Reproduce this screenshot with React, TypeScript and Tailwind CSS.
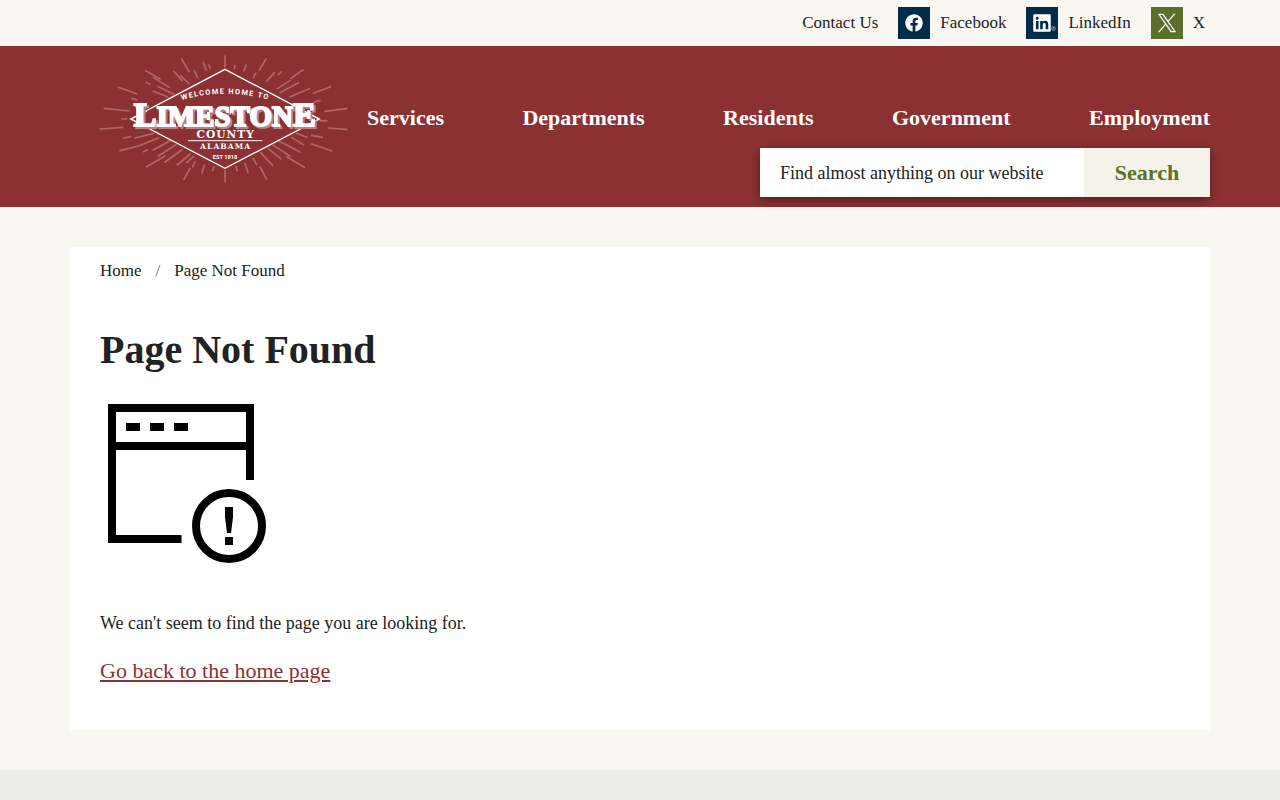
import { FaFacebook, FaLinkedin } from "react-icons/fa";

const navItems = ["Services", "Departments", "Residents", "Government", "Employment"];

const rays = [
  "M405 18V50M275 27L297 65M528 27L508 60M167 62L210 87M638 60L603 85M85 112L140 131M722 110L672 129",
  "M43 175L117 183M770 176L705 184M30 237L98 232M770 238L715 234M90 302L145 288M725 302L665 282",
  "M170 350L225 318M643 352L590 320M282 388L300 355M530 388L510 350M405 362V395",
  "M340 37L348 60M468 45L462 62M357 45L360 55M435 47L433 56M313 62L322 82M497 70L490 84M252 64L276 92",
  "M553 68L530 94M272 77L296 100M190 82L238 112M574 66L565 74M600 92L562 116M168 97L180 103M205 110L250 132",
  "M625 98L570 128M190 124L232 140M658 116L600 140M125 145L140 150M690 152L672 156",
  "M95 207L110 207M690 212L710 212M100 264L122 260M665 256L697 262M135 264L190 250M620 250L650 262",
  "M145 288L205 264M605 262L640 284M160 305L172 300M190 300L240 272M568 274L630 306M205 318L258 284",
  "M550 286L600 318M225 336L275 300M535 296L572 326M262 345L300 312M512 308L548 346M290 338L310 320",
  "M343 345L336 368M372 350L368 362M438 350L442 362M465 340L474 368M490 325L500 344M315 335L308 350",
];

function Logo() {
  return (
    <svg viewBox="27 12 750 390" className="h-[130px] w-[250px]" role="img" aria-label="Limestone County Alabama">
      <g stroke="#c9898b" strokeWidth="5" strokeLinecap="round" fill="none" opacity="0.6">
        {rays.map((d) => (
          <path key={d} d={d} />
        ))}
      </g>
      <path d="M405 58L688 207L405 355L122 207Z" fill="#8c3133" stroke="#fff" strokeWidth="4" />
      <path d="M640 184L686 207L640 231M170 184L124 207L170 231" fill="none" stroke="#fff" strokeWidth="3" />
      <path id="welcome-arc" d="M262 154Q405 108 550 154" fill="none" />
      <g fill="#fff" textAnchor="middle">
        <text fontFamily="Roboto, sans-serif" fontSize="22" fontWeight="700" letterSpacing="4">
          <textPath href="#welcome-arc" startOffset="50%">WELCOME HOME TO</textPath>
        </text>
        <text
          x="404"
          y="229"
          fontFamily="'Liberation Serif', serif"
          fontWeight="700"
          fontSize="87"
          stroke="#fff"
          strokeWidth="6"
          className="drop-shadow-[6px_6px_0_#c08082]"
        >
          <tspan fontSize="102">L</tspan>IMESTON<tspan fontSize="102">E</tspan>
        </text>
        <text x="407" y="263" fontFamily="'DejaVu Serif', serif" fontWeight="700" fontSize="32" letterSpacing="3">COUNTY</text>
        <path d="M294 272H517" stroke="#fff" strokeWidth="3" />
        <text x="407" y="298" fontFamily="'DejaVu Serif', serif" fontWeight="700" fontSize="23" letterSpacing="3">ALABAMA</text>
        <text x="405" y="327" fontFamily="Roboto, sans-serif" fontWeight="700" fontSize="17">EST 1818</text>
      </g>
    </svg>
  );
}

function ErrorIcon() {
  return (
    <svg viewBox="0 0 176 176" className="size-[176px]" aria-hidden="true">
      <path d="M150 84V12H12V143H81.500M12 50H150" fill="none" stroke="#000" strokeWidth="8" />
      <path d="M26 27h14v8H26zM50 27h14v8H50zM74 27h14v8H74z" />
      <circle cx="129" cy="130" r="33" fill="none" stroke="#000" strokeWidth="8" />
      <path d="M125 111h8v10l-2 16h-4l-2-16zM125 141h8v8h-8z" />
    </svg>
  );
}

function XIcon() {
  return (
    <svg viewBox="0 0 24 24" className="size-5" fill="#fff" aria-hidden="true">
      <path d="M14.095 10.317 22.286 1h-1.941l-7.115 8.088L7.551 1H1l8.590 12.231L1 23h1.941l7.510-8.543L16.449 23H23m-19.360-20.568h2.982L20.344 21.640h-2.982" />
    </svg>
  );
}

export default function App() {
  return (
    <div className="min-h-screen bg-[#f8f7f2] font-['Liberation_Serif',serif] text-[17px] leading-6 text-[#212322]">
      <div className="mx-auto flex h-[46px] max-w-[1140px] items-center justify-end gap-5 pr-[5px]">
        <a href="#contact">Contact Us</a>
        <a href="#facebook" className="flex items-center gap-2.5">
          <span className="flex size-8 items-center justify-center bg-[#002b49] text-white">
            <FaFacebook size={18} />
          </span>
          Facebook
        </a>
        <a href="#linkedin" className="flex items-center gap-2.5">
          <span className="relative flex size-8 items-center justify-center bg-[#002b49] text-white">
            <FaLinkedin size={20} />
            <svg viewBox="0 0 10 10" className="absolute right-0.5 bottom-2 size-[5px]" fill="none" stroke="#b8c4ce" aria-hidden="true">
              <circle cx="5" cy="5" r="4" />
              <path d="M4 7V3h2v2H4l2 2" />
            </svg>
          </span>
          LinkedIn
        </a>
        <a href="#x" className="flex items-center gap-2.5">
          <span className="flex size-8 items-center justify-center bg-[#5c702b]">
            <XIcon />
          </span>
          X
        </a>
      </div>

      <header className="bg-[#8c3133]">
        <div className="mx-auto flex max-w-[1140px] gap-[18px] pt-2 pb-2.5 pl-[29px]">
          <a href="#home" className="shrink-0 pb-[13px]">
            <Logo />
          </a>
          <div className="flex flex-1 flex-col items-end justify-end gap-3.5">
            <nav className="flex w-full justify-between text-[22px] leading-8 font-bold text-white">
              {navItems.map((item) => (
                <a key={item} href={`#${item.toLowerCase()}`}>
                  {item}
                </a>
              ))}
            </nav>
            <form role="search" className="flex h-[49px] w-[450px] shadow-[0_3px_10px_rgba(0,0,0,0.4)]">
              <input
                type="text"
                aria-label="Find almost anything on our website"
                placeholder="Find almost anything on our website"
                className="min-w-0 flex-1 bg-white px-5 text-lg outline-none placeholder:text-[#212322]"
              />
              <button type="button" className="w-[126px] bg-[#f5f3e9] text-[22px] font-bold text-[#5c702b]">
                Search
              </button>
            </form>
          </div>
        </div>
      </header>

      <main className="mx-auto max-w-[1140px] py-10">
        <div className="bg-white px-[30px] pt-3 pb-8">
          <nav aria-label="Breadcrumb" className="flex gap-3.5">
            <a href="#home">Home</a>
            <span className="text-[#6c757d]">/</span>
            <span>Page Not Found</span>
          </nav>
          <h1 className="mt-[43px] text-[40px] leading-12 font-bold">Page Not Found</h1>
          <div className="mt-[22px]">
            <ErrorIcon />
          </div>
          <p className="mt-[39px] text-lg leading-6">We can't seem to find the page you are looking for.</p>
          <p className="mt-5 pb-[11px] text-[22px] leading-8">
            <a href="#home" className="text-[#8c3133] underline decoration-2 underline-offset-2">
              Go back to the home page
            </a>
          </p>
        </div>
      </main>
      <footer className="h-[30px] bg-[#ececea]" />
    </div>
  );
}
